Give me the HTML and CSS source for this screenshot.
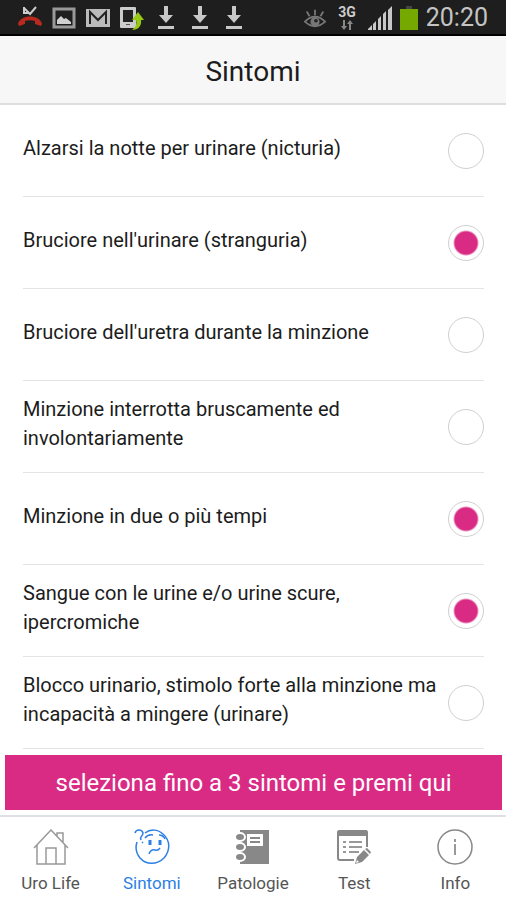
FILE: index.html
```html
<!DOCTYPE html>
<html lang="it">
<head>
<meta charset="utf-8">
<meta name="viewport" content="width=device-width, initial-scale=1">
<title>Sintomi</title>
<link rel="stylesheet" href="styles.css">
</head>
<body>
<div class="status">
  <div class="status-group notices">
    <svg class="glyph" viewBox="0 0 24 24"><path d="M6 1v6h5M6 2l6 6 6-7" fill="none" stroke="#ccc" stroke-width="2"/><path d="M0 18c2-10 22-10 24 0l-1 2-6-2v-3c-3-1-7-1-10 0v3l-6 2z" fill="#b82a1e"/></svg>
    <svg class="glyph" viewBox="0 0 24 24"><path d="M2 3h20v18H2z" fill="none" stroke="#999" stroke-width="3"/><path d="M5 18v-4l4-4 3 3 2-1 5 4v2z" fill="#d0d0d0"/></svg>
    <svg class="glyph" viewBox="0 0 24 24"><path d="M0 3h24v18H0z" fill="#bbb"/><path d="M4 18V6l8 8 8-8v12" fill="none" stroke="#222" stroke-width="2"/></svg>
    <svg class="glyph" viewBox="0 0 24 24"><rect x="0" y="1" width="16" height="21" rx="1" fill="#ccc"/><path d="M3 4h10v12H3z" fill="#222"/><path d="M6 18h4v1H6z" fill="#555"/><path d="M12 24c4-3 5-6 4-10h-4l6-8 6 8h-3c1 6-3 10-9 10z" fill="#96c814"/></svg>
    <svg class="glyph" viewBox="0 0 24 24"><path d="M10 0h4v9h5l-7 8-7-8h5zM4 20h16v3H4z" fill="#c8c8c8"/></svg>
    <svg class="glyph" viewBox="0 0 24 24"><path d="M10 0h4v9h5l-7 8-7-8h5zM4 20h16v3H4z" fill="#c8c8c8"/></svg>
    <svg class="glyph" viewBox="0 0 24 24"><path d="M10 0h4v9h5l-7 8-7-8h5zM4 20h16v3H4z" fill="#c8c8c8"/></svg>
  </div>
  <div class="status-group">
    <svg class="eye" viewBox="0 0 24 24"><path d="M1 16q11-11 22 0-11 10-22 0zM12 9V3M6 10L3 5M18 10l3-5" fill="none" stroke="#777" stroke-width="2"/><circle cx="12" cy="16" r="5" fill="#777"/><circle cx="13" cy="15" r="2" fill="#222"/></svg>
    <div class="network"><span>3G</span><svg class="arrows" viewBox="0 0 14 10"><path d="M3 0h2v6h2l-3 4-3-4h2zM9 10h2V4h2l-3-4-3 4h2z" fill="#888"/></svg></div>
    <svg class="glyph" viewBox="0 0 24 24"><path d="M0 24v-1l4-4v5zM5 24v-6l3-3v9zM10 24V13l3-3v14zM15 24V8l3-3v19zM20 24V4l4-4v24z" fill="#c8c8c8"/></svg>
    <svg class="battery" viewBox="0 0 18 24"><path d="M6 0h6v3H6z" fill="#444"/><path d="M0 3h18v21H0z" fill="#76a900"/></svg>
    <time class="clock">20:20</time>
  </div>
</div>
<header class="header"><h1>Sintomi</h1></header>
<form class="form">
  <div class="list">
    <label class="row"><span>Alzarsi la notte per urinare (nicturia)</span><input type="checkbox"></label>
    <label class="row"><span>Bruciore nell'urinare (stranguria)</span><input type="checkbox" checked></label>
    <label class="row"><span>Bruciore dell'uretra durante la minzione</span><input type="checkbox"></label>
    <label class="row"><span>Minzione interrotta bruscamente ed involontariamente</span><input type="checkbox"></label>
    <label class="row"><span>Minzione in due o più tempi</span><input type="checkbox" checked></label>
    <label class="row"><span>Sangue con le urine e/o urine scure, ipercromiche</span><input type="checkbox" checked></label>
    <label class="row"><span>Blocco urinario, stimolo forte alla minzione ma incapacità a mingere (urinare)</span><input type="checkbox"></label>
  </div>
  <button class="submit" type="button">seleziona fino a 3 sintomi e premi qui</button>
</form>
<nav class="tabs">
  <a class="tab" href="#home"><svg viewBox="0 0 36 36" fill="none" stroke="#999" stroke-width="1.5"><path d="M1 19L18 1l17 18M4 16v19h28V16M13 35V19h10v16M24 7V4h6v9"/></svg>Uro Life</a>
  <a class="tab active" href="#sintomi"><svg viewBox="0 0 36 36" fill="none" stroke="#2c80e4" stroke-width="1.5"><path d="M11 4C16 0 24 0 29 5c8 7 7 17 1 24-7 7-18 7-24 0-4-5-5-10-3-16"/><path d="M1 4c1-4 7-4 8 0 0 4-4 3-2 7M8 13l1 1"/><path d="M16 11v5M26 11v5" stroke-width="3"/><path d="M11 9q3-4 8-3M25 6q4 0 6 4M15 25q2-5 6-4 3 1 5-2"/></svg>Sintomi</a>
  <a class="tab" href="#patologie"><svg viewBox="0 0 36 36"><path d="M5 1h29v34H5z" fill="#888"/><path d="M12 5h16v12H12z" fill="#fff"/><path d="M15 8h10v2H15zM15 12h10v2H15z" fill="#888"/><g fill="#888" stroke="#fff" stroke-width="2"><ellipse cx="5" cy="8" rx="5" ry="4"/><ellipse cx="5" cy="18" rx="5" ry="4"/><ellipse cx="5" cy="28" rx="5" ry="4"/></g></svg>Patologie</a>
  <a class="tab" href="#test"><svg viewBox="0 0 36 36"><path d="M18 31H4q-2 0-2-2V4q0-2 2-2h25q2 0 2 2v14" fill="none" stroke="#888" stroke-width="2"/><path d="M1 7V4q0-3 3-3h25q3 0 3 3v3z" fill="#888"/><path d="M13 13h13M13 18h13M13 23h10M7 13h3M7 18h3M7 23h3" stroke="#999" stroke-width="2"/><path d="M19 35l2-7 7-7 5 5-7 7zM29 20l2-1 4 4-1 2z" fill="#888"/><path d="M20 34l1-3 2 2z" fill="#fff"/></svg>Test</a>
  <a class="tab" href="#info"><svg viewBox="0 0 36 36"><circle cx="18" cy="18" r="17" fill="none" stroke="#888" stroke-width="1.5"/><path d="M18 10v3M18 15v11" stroke="#999" stroke-width="2"/></svg>Info</a>
</nav>
</body>
</html>
```
FILE: styles.css
```css
* { box-sizing: border-box; }

body {
  margin: 0;
  min-height: 100vh;
  display: flex;
  flex-direction: column;
  background: #fff;
  color: #1c1c1c;
  font-family: Roboto, sans-serif;
}

.status {
  display: flex;
  justify-content: space-between;
  align-items: center;
  height: 36px;
  padding: 2px 18px 0;
  background: #1e1e1e;
  border-bottom: 2px solid #000;
}

.status-group {
  display: flex;
  align-items: center;
  gap: 8px;
}

.notices { gap: 10px; }
.glyph { width: 24px; height: 24px; }
.eye { width: 22px; height: 22px; margin-right: 4px; }
.battery { width: 18px; height: 24px; }

.network {
  display: flex;
  flex-direction: column;
  align-items: center;
  gap: 2px;
  margin-right: 4px;
  color: #ccc;
  font-size: 14px;
  font-weight: 700;
  line-height: 12px;
}

.arrows { width: 14px; height: 10px; }

.clock {
  color: #c4c4c4;
  font-size: 25px;
  line-height: 32px;
}

.header {
  padding: 18px 24px 13px;
  background: #f7f7f7;
  border-bottom: 2px solid #dedede;
  text-align: center;
}

.header h1 {
  margin: 0;
  font-size: 28px;
  font-weight: 400;
  line-height: 36px;
}

.form {
  flex: 1;
  display: flex;
  flex-direction: column;
}

.list {
  flex: 1;
  padding: 0 22px 0 23px;
}

.row {
  display: flex;
  align-items: center;
  justify-content: space-between;
  gap: 8px;
  min-height: 92px;
  border-bottom: 1px solid #e4e4e4;
  font-size: 20px;
  line-height: 29px;
}

.row span { padding-bottom: 5px; }

.row input {
  appearance: none;
  flex: none;
  width: 36px;
  height: 36px;
  margin: 0;
  border: 1px solid #cfcfcf;
  border-radius: 50%;
  background: #fff;
}

.row input:checked {
  background: radial-gradient(circle, #d92b84 11px, #fff 13px);
}

.submit {
  margin: 6px 4px 5px 5px;
  padding: 0 16px;
  min-height: 55px;
  border: 0;
  background: #d92b84;
  color: #fff;
  font: 400 24px/32px Roboto, sans-serif;
}

.tabs {
  display: flex;
  min-height: 85px;
  border-top: 2px solid #dde0e4;
}

.tab {
  flex: 1;
  display: flex;
  flex-direction: column;
  align-items: center;
  gap: 8px;
  padding-top: 12px;
  color: #555;
  font-size: 17px;
  line-height: 20px;
  text-decoration: none;
}

.tab svg { width: 36px; height: 36px; }
.tab.active { color: #2c80e4; }
```
